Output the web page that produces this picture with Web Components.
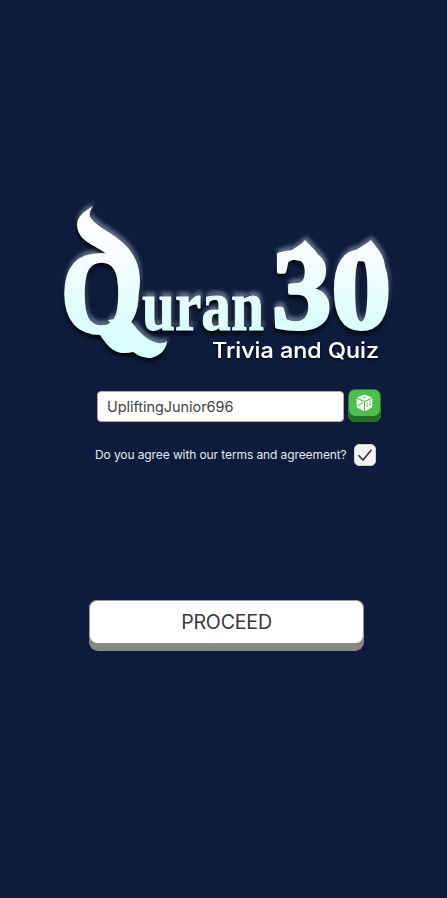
<!DOCTYPE html>
<html lang="en"><head><meta charset="utf-8"><title>Quran 30</title>
<style>html,body{margin:0;background:#0d1c3c}</style></head><body>
<quiz-welcome></quiz-welcome>
<script>
class Base extends HTMLElement{constructor(){super();this.attachShadow({mode:'open'}).innerHTML=this.constructor.html;}}
class QuizLogo extends Base{static html=`<style>
:host{display:block;width:447px;height:190px}svg{display:block;overflow:visible}
.word{font-family:"Liberation Serif",serif;font-weight:700}
.tag{font:500 22px Inter,sans-serif;fill:#fff;filter:url(#shade)}</style>
<svg width="447" height="190" viewBox="0 190 447 190">
<defs><linearGradient id="ice" gradientUnits="userSpaceOnUse" x1="0" y1="215" x2="0" y2="335"><stop offset="0" stop-color="#fff"/><stop offset=".3" stop-color="#f8fcff"/><stop offset="1" stop-color="#d9ffff"/></linearGradient>
<filter id="glow" filterUnits="userSpaceOnUse" x="40" y="180" width="380" height="200" color-interpolation-filters="sRGB"><feDropShadow dx="0" dy="3" stdDeviation="2" flood-color="#000" flood-opacity=".9" result="a"/><feGaussianBlur in="SourceAlpha" stdDeviation="2.2"/><feOffset dx="1" dy="-4"/><feComponentTransfer result="b"><feFuncA type="linear" slope=".45"/></feComponentTransfer><feFlood flood-color="#dcdff5"/><feComposite in2="b" operator="in" result="c"/><feMerge><feMergeNode in="c"/><feMergeNode in="a"/></feMerge></filter>
<filter id="shade" x="-5%" y="-20%" width="110%" height="150%"><feDropShadow dx="0" dy="1.5" stdDeviation="1" flood-color="#000" flood-opacity="1"/></filter></defs>
<g filter="url(#glow)" fill="url(#ice)" stroke="url(#ice)" stroke-linejoin="round">
<text class="word"><tspan x="61" y="332" font-size="117" stroke-width="4" textLength="81" lengthAdjust="spacingAndGlyphs">Q</tspan><tspan x="142" y="330" font-size="71" stroke-width="1" textLength="122" lengthAdjust="spacingAndGlyphs">uran</tspan><tspan x="272" y="328" font-size="114" stroke-width="4" textLength="119" lengthAdjust="spacingAndGlyphs">30</tspan></text>
<g stroke="none">
<!-- flame flourish above the initial, and the sweep below it -->
<path d="M93 206C83 212 77 217 77 225C78 239 89 243 99 249C112 257 124 267 124 287C124 297 121 304 119 309L127 317C134 307 140 297 140 281C140 263 132 250 121 241C109 231 96 226 91 218C88 214 91 209 93 206Z"/>
<path d="M108 320C118 332 121 342 132 351C138 356 144 358 151 358C160 356 166 350 167 341C162 345 156 343 150 340C140 335 134 324 127 317Z"/>
<!-- pointed tips over the digits -->
<path d="M305 240C299 247 289 250 281 258L321 264C320 252 311 247 305 240Z"/>
<path d="M371 240C361 248 350 251 342 264L352 261L378 262L385 266C384 254 376 247 371 240Z"/>
</g></g>
<text class="tag" x="212" y="358" textLength="167" lengthAdjust="spacingAndGlyphs">Trivia and Quiz</text>
</svg>`}
class NameField extends Base{static html=`<style>
:host{display:flex;align-items:center;box-sizing:border-box;width:247px;height:31px;padding:0 9px;background:#fff;border:1px solid #aaa;border-radius:4px;color:#444;font:400 14.5px Inter,sans-serif;letter-spacing:-.05px;white-space:nowrap}</style><slot></slot>`}
class DiceButton extends Base{static html=`<style>
:host{display:flex;justify-content:center;box-sizing:border-box;width:33px;height:33px;padding-top:4px;border:1px solid #2c7b30;border-bottom:0;border-radius:7px;background:#4bc04b;box-shadow:inset 0 -6px #29682c}svg{display:block;flex:none}</style>
<svg width="17" height="18" viewBox="0 0 17 18"><g fill="#fff"><path d="M8.5 .5 16 3.5 8.5 7 1 3.5Z"/><path d="M.5 4.6 8 8V17.2L.8 13.3Z"/><path d="M16.5 4.6 9 8V17.2L16.2 13.3Z"/></g><g fill="#4bc04b"><ellipse cx="8.5" cy="3.4" rx="1.5" ry=".7"/><circle cx="2.7" cy="11.4" r=".85"/><circle cx="4.3" cy="10" r=".85"/><circle cx="5.8" cy="8.9" r=".85"/><circle cx="11.3" cy="11.7" r=".85"/><circle cx="11.3" cy="9.2" r=".8"/><circle cx="14" cy="10.3" r=".85"/><circle cx="14" cy="7.5" r=".8"/></g></svg>`}
class TermsCheck extends Base{static html=`<style>
:host{display:flex;align-items:center;gap:8px;color:#e6e8ed;font:400 12px Inter,sans-serif;letter-spacing:-.1px;white-space:nowrap}
span{width:251px;padding-bottom:2px}.box{display:grid;place-items:center;box-sizing:border-box;width:22px;height:22px;background:#f4f4f4;border:1px solid #cfcfcf;border-radius:5px}</style>
<span><slot></slot></span><div class="box"><svg width="16" height="14" viewBox="0 0 16 14"><path d="M1.5 7.3 6 12 14.5 1.8" fill="none" stroke="#343434" stroke-width="1.6"/></svg></div>`}
class ProceedButton extends Base{static html=`<style>
:host{display:block;box-sizing:border-box;width:275px;height:51px;padding:0 0 8px;background:#858785;border-radius:9px}
div{display:grid;place-items:center;box-sizing:border-box;height:43px;background:#fff;border:1px solid #999;border-bottom:0;border-radius:8px;color:#3a3a3a;font:400 19.6px Inter,sans-serif;letter-spacing:-.2px}</style><div><slot></slot></div>`}
class QuizWelcome extends Base{static html=`<style>
:host{display:flex;flex-direction:column;box-sizing:border-box;width:447px;height:898px;padding-top:190px;background:#0d1c3c}
.name{display:flex;gap:4px;margin:9px 0 0 97px;align-items:flex-start}name-field{margin-top:2px}
terms-check{margin:22px 0 0 95px}proceed-button{margin:134px 0 0 89px}</style>
<quiz-logo></quiz-logo><div class="name"><name-field>UpliftingJunior696</name-field><dice-button></dice-button></div>
<terms-check>Do you agree with our terms and agreement?</terms-check><proceed-button>PROCEED</proceed-button>`}
customElements.define('quiz-logo',QuizLogo);customElements.define('name-field',NameField);customElements.define('dice-button',DiceButton);customElements.define('terms-check',TermsCheck);customElements.define('proceed-button',ProceedButton);customElements.define('quiz-welcome',QuizWelcome);
</script></body></html>
